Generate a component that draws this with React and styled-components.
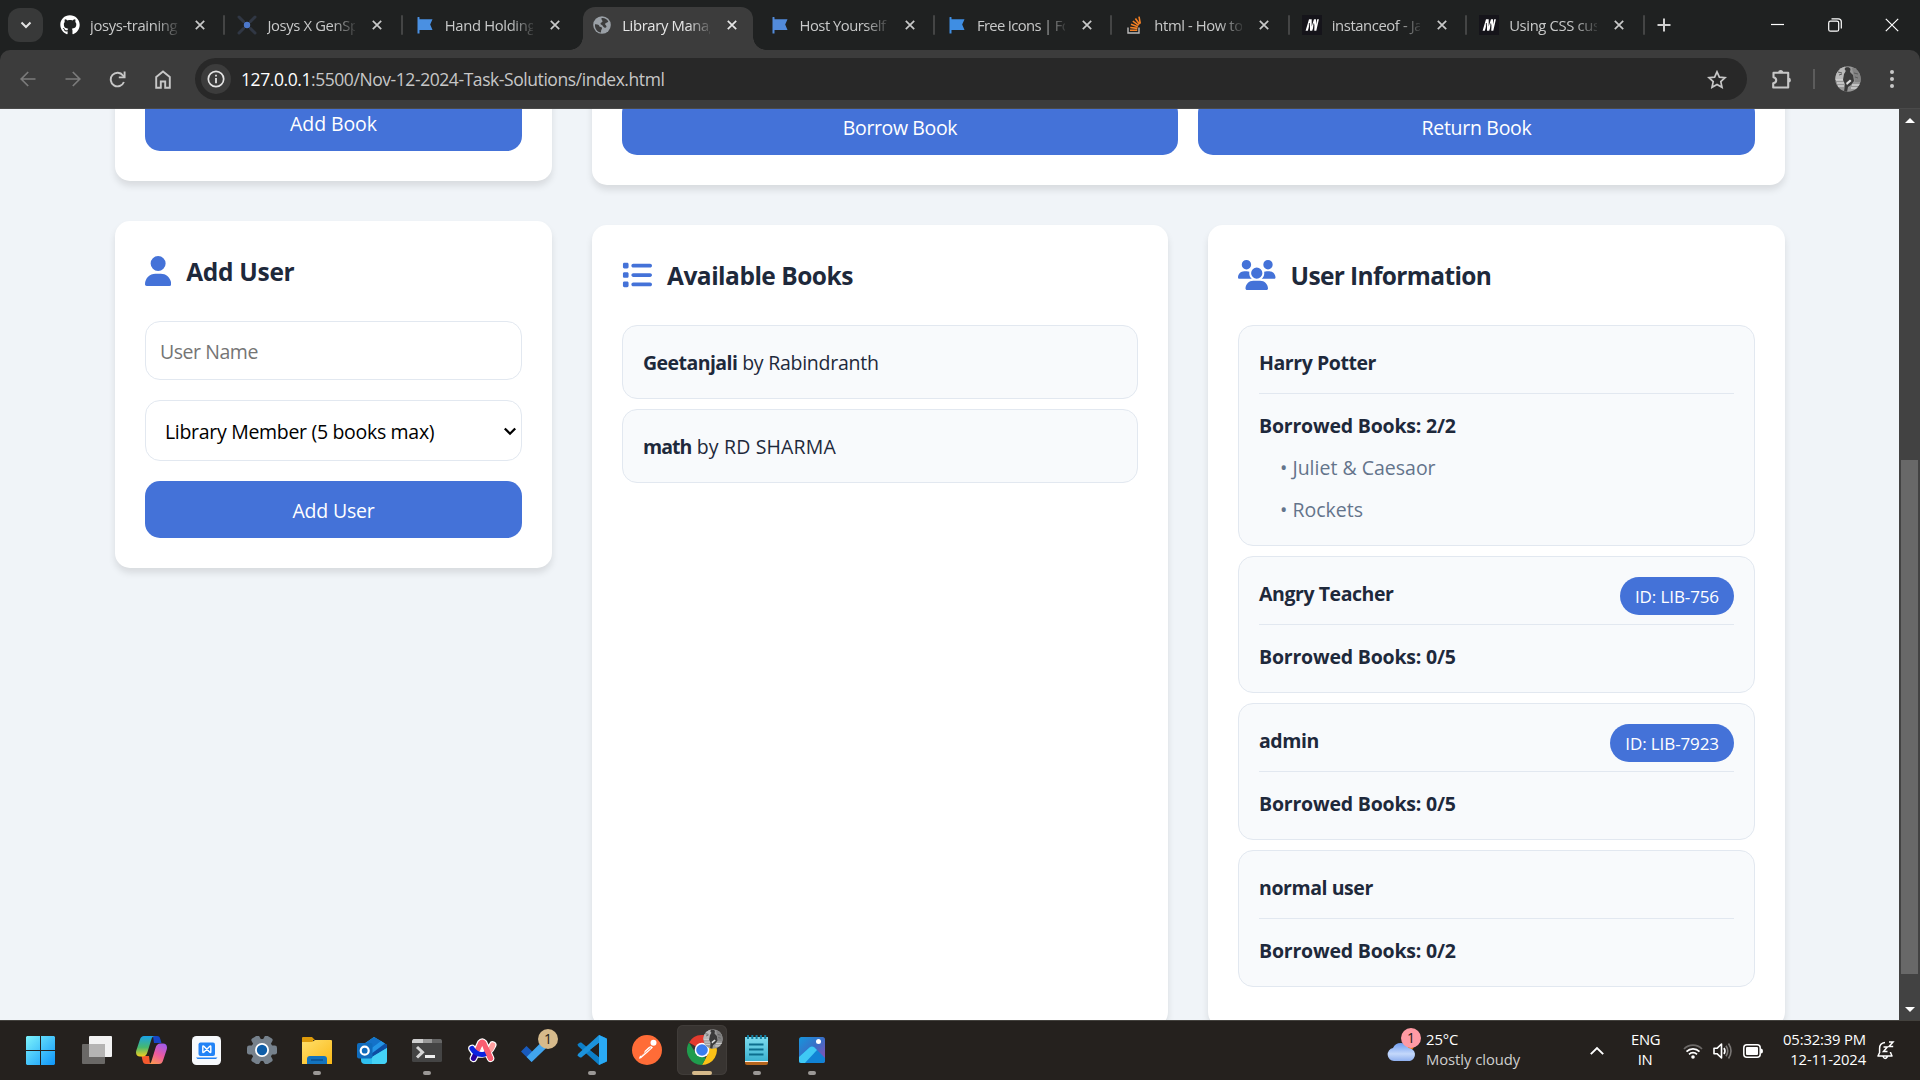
import React from "react";
import styled, { createGlobalStyle, css } from "styled-components";
import { FaUser, FaList, FaUsers, FaGithub } from "react-icons/fa6";

const GlobalStyle = createGlobalStyle`
  * { box-sizing: border-box; }
  body {
    margin: 0;
    overflow: hidden;
    font-family: "Open Sans", "Noto Sans", sans-serif;
  }
`;

const BLUE = "#4472d8";

const Screen = styled.div`
  width: 1920px;
  height: 1080px;
  display: flex;
  flex-direction: column;
  overflow: hidden;
  background: #1f2121;
`;

/* ---------- Browser chrome ---------- */

const TabStrip = styled.div`
  height: 50px;
  flex: none;
  display: flex;
  align-items: stretch;
  padding-left: 8px;
`;

const TabSearch = styled.button`
  width: 35px;
  height: 34px;
  margin: 8px 4px 0 0;
  border: 0;
  padding: 0;
  border-radius: 12px;
  background: #383939;
  display: grid;
  place-items: center;
`;

const TabItem = styled.div`
  position: relative;
  width: 177.4px;
  flex: none;
  display: grid;
  grid-template-columns: 20px 88px 22px;
  column-gap: 10px;
  align-items: center;
  padding-left: 13px;
  color: ${(p) => (p.$active ? "#e6e6e6" : "#c8c9c9")};
  isolation: isolate;

  ${(p) =>
    p.$separator &&
    css`
      &::after {
        content: "";
        position: absolute;
        right: -1px;
        top: 15px;
        width: 2px;
        height: 20px;
        border-radius: 1px;
        background: #444545;
      }
    `}
`;

const ActiveShape = styled.span`
  position: absolute;
  z-index: -1;
  top: 7px;
  bottom: 0;
  left: 4px;
  right: 4px;
  border-radius: 12px 12px 0 0;
  background: #3c3c3c;

  &::before,
  &::after {
    content: "";
    position: absolute;
    bottom: 0;
    width: 13px;
    height: 13px;
  }
  &::before {
    left: -13px;
    background: radial-gradient(circle at 0 0, transparent 12.5px, #3c3c3c 13px);
  }
  &::after {
    right: -13px;
    background: radial-gradient(circle at 100% 0, transparent 12.5px, #3c3c3c 13px);
  }
`;

const Favicon = styled.span`
  display: grid;
  place-items: center;
  width: 20px;
  height: 20px;
  color: #fff;
`;

const TabTitle = styled.span`
  font-size: 14.8px;
  line-height: 20px;
  letter-spacing: ${(p) => p.$ls || -0.35}px;
  white-space: nowrap;
  overflow: hidden;
  mask-image: linear-gradient(to right, #000 74%, rgba(0, 0, 0, 0.15) 100%);
`;

const TabClose = styled.span`
  display: grid;
  place-items: center;
  margin-left: 2px;
`;

const NewTab = styled.span`
  width: 40px;
  display: grid;
  place-items: center;
`;

const WindowControls = styled.div`
  margin-left: auto;
  display: grid;
  grid-template-columns: repeat(3, 57px);
  place-items: center;
  height: 49px;
`;

const Toolbar = styled.div`
  height: 59px;
  flex: none;
  display: flex;
  align-items: center;
  background: #3c3c3c;
  border-bottom: 1px solid #4a4a4a;
  border-radius: 10px 10px 0 0;
  padding-left: 5px;
`;

const NavButton = styled.span`
  width: 45px;
  height: 42px;
  display: grid;
  place-items: center;
`;

const AddressBar = styled.div`
  width: 1552px;
  flex: none;
  height: 42px;
  margin-left: 10px;
  padding: 0 20px 0 6px;
  border-radius: 21px;
  background: #282828;
  display: flex;
  align-items: center;
  gap: 10px;
`;

const InfoBadge = styled.span`
  width: 30px;
  height: 30px;
  border-radius: 50%;
  background: #3c3c3c;
  display: grid;
  place-items: center;
`;

const Url = styled.span`
  flex: 1;
  font-size: 17.5px;
  line-height: 24px;
  letter-spacing: -0.43px;
  color: #c7c7c7;
  b {
    font-weight: 400;
    color: #fff;
  }
`;

const ToolbarEnd = styled.div`
  flex: 1;
  display: flex;
  align-items: center;
  padding-left: 23px;
`;

const Divider = styled.span`
  width: 2px;
  height: 20px;
  margin: 0 20px;
  background: #5c5c5c;
`;

/* ---------- Page ---------- */

const Viewport = styled.div`
  height: 911px;
  flex: none;
  display: flex;
  background: #f0f4f8;
`;

const Page = styled.main`
  flex: 1;
  height: 911px;
  overflow: hidden;
  color: #1e293b;
`;

const Columns = styled.div`
  margin: -45px 114px 0 115px;
  display: grid;
  grid-template-columns: 437px 1fr;
  column-gap: 40px;
  align-items: start;
`;

const Stack = styled.div`
  display: flex;
  flex-direction: column;
  gap: 40px;
`;

const Split = styled.div`
  display: grid;
  grid-template-columns: 576px 577px;
  column-gap: 40px;
`;

const Card = styled.section`
  background: #fff;
  border-radius: 15px;
  padding: ${(p) => p.$top || 30}px 30px 30px;
  box-shadow: 0 5px 7.5px rgba(0, 0, 0, 0.1);
`;

const CardTitle = styled.h2`
  margin: 0 0 30px;
  height: 40px;
  display: flex;
  align-items: center;
  gap: 15px;
  font-size: 24.5px;
  line-height: 42px;
  font-weight: 700;
  letter-spacing: ${(p) => p.$ls}px;

  svg {
    color: ${BLUE};
    height: 30px;
    width: ${(p) => p.$icon}px;
    flex: none;
  }

  span {
    padding-top: 1px;
  }
`;

const ButtonRow = styled.div`
  display: grid;
  grid-template-columns: 556px 557px;
  gap: 20px;
`;

const Button = styled.button`
  display: block;
  width: 100%;
  height: 57px;
  border: 0;
  padding: 3px 0 0;
  border-radius: 15px;
  background: ${BLUE};
  color: #fff;
  font: 400 19.5px/30px "Open Sans", "Noto Sans", sans-serif;
  letter-spacing: ${(p) => p.$ls}px;
`;

const Form = styled.form`
  display: flex;
  flex-direction: column;
  gap: 20px;
`;

const fieldText = css`
  font: 400 19.5px/30px "Open Sans", "Noto Sans", sans-serif;
`;

const TextField = styled.input`
  ${fieldText}
  height: 59px;
  border: 1px solid #e2e8f0;
  border-radius: 15px;
  padding: 2px 14px 0;
  letter-spacing: -0.45px;
  outline: 0;
  &::placeholder {
    color: #757575;
    opacity: 1;
  }
`;

const SelectField = styled.div`
  ${fieldText}
  height: 61px;
  border: 1px solid #e2e8f0;
  border-radius: 15px;
  padding: 2px 4px 0 19px;
  color: #000;
  letter-spacing: -0.31px;
  display: flex;
  align-items: center;
  justify-content: space-between;
`;

const List = styled.ul`
  list-style: none;
  margin: 0;
  padding: 0 0 10px;
  display: flex;
  flex-direction: column;
  gap: 10px;
`;

const Item = styled.li`
  border: 1px solid #e2e8f0;
  border-radius: 15px;
  background: #f8fafc;
  padding: ${(p) => (p.$book ? "21px 20px 19px" : "20px")};
  font-size: 19.5px;
  line-height: 32px;
  letter-spacing: ${(p) => p.$ls || 0}px;
`;

const Strong = styled.strong`
  font-size: 19.5px;
  font-weight: 700;
  letter-spacing: ${(p) => p.$ls || -0.43}px;
`;

const UserHead = styled.div`
  height: 48px;
  display: flex;
  justify-content: space-between;
  align-items: flex-start;
  border-bottom: 1px solid #e2e8f0;
  margin-bottom: 16px;

  ${Strong} {
    padding-top: 1px;
  }
`;

const IdBadge = styled.span`
  height: 38px;
  padding: 0 15px;
  border-radius: 19px;
  background: ${BLUE};
  color: #fff;
  font-size: 17px;
  line-height: 39px;
  letter-spacing: -0.1px;
  white-space: nowrap;
`;

const Borrowed = styled.div`
  height: 31px;
`;

const Loan = styled.div`
  margin-top: 11px;
  margin-bottom: -1px;
  padding-left: 21px;
  color: #64748b;
`;

const ScrollTrack = styled.div`
  width: 21px;
  background: #424242;
  display: flex;
  flex-direction: column;
  align-items: center;
  padding: 9px 0 8px;
`;

const ScrollArrow = styled.span`
  border: 5.5px solid transparent;
  ${(p) => (p.$up ? "border-top: 0; border-bottom-color: #fff;" : "border-bottom: 0; border-top-color: #fff;")}
`;

const ScrollThumb = styled.span`
  width: 17px;
  height: 514px;
  margin: 337px 0 auto;
  background: #686868;
`;

/* ---------- Taskbar ---------- */

const TaskBar = styled.footer`
  height: 60px;
  flex: none;
  border-top: 1px solid #43413d;
  background: #25211e;
  display: flex;
  align-items: center;
  padding: 0 26px 0 14px;
  color: #fff;
`;

const AppSlot = styled.span`
  position: relative;
  width: 55px;
  height: 59px;
  display: grid;
  place-items: center;
`;

const AppTile = styled.span`
  width: 50px;
  height: 50px;
  margin-bottom: 1px;
  border-radius: 6px;
  display: grid;
  place-items: center;
  ${(p) => p.$active && "background: #383431; box-shadow: inset 0 0 0 1px #403c39;"}

  svg {
    margin-right: ${(p) => (p.$shift ? p.$shift : 0)}px;
  }
`;

const RunningMark = styled.span`
  position: absolute;
  bottom: 5px;
  width: ${(p) => (p.$wide ? 20 : 8)}px;
  height: 4px;
  border-radius: 2px;
  background: ${(p) => (p.$wide ? "#d6ba8b" : "#9b9896")};
`;

const CountBadge = styled.span`
  position: absolute;
  top: ${(p) => p.$y}px;
  left: ${(p) => p.$x}px;
  width: 20px;
  height: 20px;
  border-radius: 50%;
  background: ${(p) => p.$color};
  color: #1f1a17;
  font-size: 14px;
  line-height: 20px;
  text-align: center;
`;

const Weather = styled.div`
  position: relative;
  margin-left: auto;
  margin-right: 70px;
  height: 59px;
  display: flex;
  align-items: center;
  gap: 9px;
`;

const TrayText = styled.div`
  width: ${(p) => p.$w}px;
  text-align: ${(p) => p.$align || "left"};
  font-size: 14.8px;
  line-height: 20px;
  letter-spacing: ${(p) => p.$ls || 0}px;
  margin-right: ${(p) => p.$mr || 0}px;
  white-space: nowrap;
  padding-bottom: 3px;
  div + div {
    color: ${(p) => p.$second || "#fff"};
  }
`;

const TrayIcon = styled.svg`
  margin-right: ${(p) => p.$mr}px;
  flex: none;
  overflow: visible;
`;

/* ---------- Icons ---------- */

const CloseX = ({ color = "#c8c9c9" }) => (
  <svg width="10" height="10" viewBox="0 0 10 10">
    <path d="M.8.8l8.4 8.4M9.2.8L.8 9.2" stroke={color} strokeWidth="1.7" />
  </svg>
);

const Josys = () => (
  <svg width="20" height="20" viewBox="0 0 20 20">
    <path d="M2 2l4.5 4.5M18 2l-4.5 4.5M2 18l4.5-4.5M18 18l-4.5-4.5" stroke="#303744" strokeWidth="3" strokeLinecap="round" />
    <circle cx="10" cy="10" r="3.2" fill="#4c78cc" />
  </svg>
);

const Flag = ({ color }) => (
  <svg width="16" height="17" viewBox="0 0 16 17">
    <path d="M.5.8A1 1 0 0 1 2.500.8V2.300h13l-2.300 5.200 2.300 5.500h-13v3.500h-2z" fill={color} />
  </svg>
);

const Globe = () => (
  <svg width="18" height="18" viewBox="0 0 18 18">
    <circle cx="9" cy="9" r="8.800" fill="#9aa0a6" />
    <path d="M2 8.200c2.200-.3 4 .5 4.300 1.800.3 1.300 2.500.5 2.700 2.300.1 1.200-1.200 1.600-1 4.200-3.600-.5-6.400-3.800-6-8.300zM8.600 2c2.800-.5 5.400 1 6.700 3.400-.8 1.500-2.700.9-3.100 2.300-.4 1.400 1.900 1.700 1.200 3.300-.7 1.500-2.800.3-3.600-1.100-.8-1.500-2.500-.9-2.300-2.400.2-1.300 2-.8 2-2.300 0-1.200-1.700-1.500-.9-3.200z" fill="#3c3c3c" />
  </svg>
);

const StackOverflow = () => (
  <svg width="15" height="18" viewBox="0 0 15 18">
    <path d="M1 11.500v5.500h11v-5.500" fill="none" stroke="#bcbbbb" strokeWidth="1.400" />
    <path d="M3 14.300h7.200M3.200 11.500l7.200.9M4 8.300l6.800 2.400M5.800 5.200l5.800 4.200M8.400 2.500l4.200 5.800M12 .6l1.300 7" stroke="#f48024" strokeWidth="1.600" />
  </svg>
);

const Mdn = () => (
  <svg width="20" height="20" viewBox="0 0 20 20">
    <rect width="20" height="20" fill="#15141a" />
    <path d="M7 4.300h2.400l-3.600 11.400H3.600zM8 4.300h1.700v11.400H8zM12 4.300h1.900l-3.700 11.400H8.300zM12.300 4.300H14v11.400h-1.700zM15.200 4.300h1.700l-2.600 11.400h-1.700z" fill="#fff" />
    <path d="M7.400 8v5M11.700 8.500v5" stroke="#15141a" strokeWidth=".8" />
  </svg>
);

const Portrait = ({ size }) => (
  <svg width={size} height={size} viewBox="0 0 26 26">
    <defs>
      <clipPath id={`p${size}`}>
        <circle cx="13" cy="13" r="12.700" />
      </clipPath>
    </defs>
    <g clipPath={`url(#p${size})`}>
      <rect width="26" height="26" fill="#979797" />
      <path d="M0 0h10v8l-2 6H0z" fill="#b9b9b9" />
      <path d="M17 2h9v14h-6z" fill="#828282" />
      <path d="M1 14h8M2 17h7M3 20h6M17 19h9M16 22h8" stroke="#d2d2d2" strokeWidth="1.300" />
      <path d="M9.500 3c1-2.500 5-2.500 6 0l-.5 3 3 3 1 6-3 4-3 2-1 5h-3l1-8-2-4 1-6 2-3z" fill="#3a3a3a" />
      <path d="M11 17l4-3.500 1.500 1.500-4.500 4z" fill="#e0e0e0" />
      <path d="M3 6l4 1M4 9l3-1M19 7l4 1M20 11l3 1" stroke="#5c5c5c" />
    </g>
  </svg>
);

const Win = () => (
  <svg width="29" height="29" viewBox="0 0 29 29">
    <defs>
      <linearGradient id="win" x1="0" y1="0" x2="29" y2="29" gradientUnits="userSpaceOnUse">
        <stop stopColor="#7df3fb" />
        <stop offset="1" stopColor="#0f96fa" />
      </linearGradient>
    </defs>
    <path fill="url(#win)" d="M1 0h13v14H0V1zM15 0h13l1 1v13H15zM0 15h14v14H1l-1-1zM15 15h14v13l-1 1H15z" />
  </svg>
);

const TaskView = () => (
  <svg width="30" height="28" viewBox="0 0 30 28">
    <rect y="8" width="23" height="20" rx="1" fill="#6a6866" />
    <rect x="7" y="0" width="23" height="21" rx="1" fill="#f2f2f2" />
    <path d="M7 8h16v13H7z" fill="#b5b4b3" />
  </svg>
);

const Copilot = () => (
  <svg width="31" height="28" viewBox="0 0 31 28">
    <defs>
      <linearGradient id="cpa" x1="0" y1="0" x2="0" y2="1">
        <stop stopColor="#1aa3e8" />
        <stop offset=".55" stopColor="#46b86f" />
        <stop offset="1" stopColor="#f3cf1f" />
      </linearGradient>
      <linearGradient id="cpb" x1="0.700" y1="0" x2="0.200" y2="1">
        <stop stopColor="#a45be8" />
        <stop offset=".5" stopColor="#ee5a9d" />
        <stop offset="1" stopColor="#fb9a4e" />
      </linearGradient>
    </defs>
    <path d="M17 0h4c2 0 2.800 1 3.300 3l1.200 4H18z" fill="#1746c8" />
    <path d="M14 28h-4c-2 0-2.800-1-3.300-3l-1.200-5H13z" fill="#f4592e" />
    <path d="M8 0h11c-2 0-3 1-3.800 4l-3.700 12c-.9 3-2.200 4.500-5 4.500H4c-3 0-4.700-2-3.700-6L3.800 4C4.700 1 6 0 8 0z" fill="url(#cpa)" />
    <path d="M23 28H12c2 0 3-1 3.800-4l3.700-12c.9-3 2.200-4.500 5-4.500H27c3 0 4.700 2 3.700 6L27.200 24c-.9 3-2.200 4-4.200 4z" fill="url(#cpb)" />
  </svg>
);

const MyPc = () => (
  <svg width="29" height="29" viewBox="0 0 29 29">
    <rect width="29" height="29" rx="4.500" fill="#f7f9fc" />
    <rect x="6.500" y="6.500" width="16.500" height="13.500" rx="2" fill="#2383f6" />
    <path d="M10.800 15.800v-5.200q0-1.200 1-.4l6 6q1 .8 1-.4v-5.200q0-1.200-1-.4l-6 6q-1 .8-1-.4z" fill="none" stroke="#fff" strokeWidth="1.400" strokeLinejoin="round" />
    <path d="M4 21.500h21.500l-1.500 1.500H5.500z" fill="#2383f6" />
  </svg>
);

const Gear = () => (
  <svg width="30" height="28" viewBox="0 0 30 28">
    <g fill="#76818c">
      <circle cx="15" cy="14" r="11" />
      {[0, 60, 120, 180, 240, 300].map((a) => (
        <rect key={a} x="10.500" y="-1" width="9" height="9" rx="2.200" transform={`rotate(${a + 30} 15 14)`} />
      ))}
    </g>
    <circle cx="15" cy="14" r="7" fill="#fff" />
    <circle cx="15" cy="14" r="5.200" fill="#0f5ea8" />
  </svg>
);

const Folder = () => (
  <svg width="30" height="27" viewBox="0 0 30 27">
    <defs>
      <linearGradient id="fold" x1="0" y1="0" x2="1" y2="1">
        <stop stopColor="#ffdf6b" />
        <stop offset="1" stopColor="#fbb917" />
      </linearGradient>
    </defs>
    <path d="M0 1q0-1 1-1h9l3 3h-2v5H0z" fill="#dd9a0a" />
    <path d="M0 5h10l3-2h16q1 0 1 1v23H0z" fill="url(#fold)" />
    <path d="M5 27v-5q0-3 3-3h14q3 0 3 3v5z" fill="#1373be" />
    <path d="M9 23h12" stroke="#0a4f91" strokeWidth="1.500" />
  </svg>
);

const Outlook = () => (
  <svg width="30" height="27" viewBox="0 0 30 27">
    <path d="M4 9L17 0l13 8v15q0 4-4 4H8q-4 0-4-4z" fill="#2fc0ef" />
    <path d="M4 9L17 0l8 4.500L11 14H4z" fill="#1472c9" />
    <path d="M14 16L27 6l3 2v3L15 20z" fill="#0d4ea3" />
    <path d="M11 14L24 4l4 2.500L14 17z" fill="#2495e6" />
    <path d="M15 20l15-9v12q0 4-4 4H15z" fill="#44d2f6" />
    <rect y="6" width="15.500" height="15.500" rx="2" fill="#0f6cbd" />
    <circle cx="7.700" cy="13.700" r="4" fill="none" stroke="#fff" strokeWidth="2.200" />
  </svg>
);

const Terminal = () => (
  <svg width="30" height="23" viewBox="0 0 30 23">
    <rect width="30" height="23" rx="1.500" fill="#444" />
    <path d="M1.500 0H11v4H0V1.500z" fill="#cfcfcf" />
    <path d="M11 0h9v4h-9z" fill="#999" />
    <path d="M20 0h8.500L30 1.500V4H20z" fill="#666" />
    <path d="M5 8l5.500 5.200L5 18.500" fill="none" stroke="#d5d5d5" strokeWidth="3" />
    <path d="M13 17.500h10" stroke="#eee" strokeWidth="3" />
  </svg>
);

const Arc = () => (
  <svg width="29" height="25" viewBox="0 0 29 25">
    <g fill="none" strokeLinecap="round" strokeLinejoin="round">
      <path d="M4 10.500q3 6 10 5.500T24.700 7M5.500 20.300L12.700 5q1.500-2 3 0L22.500 20.300" stroke="#fff" strokeWidth="7.600" />
      <path d="M5.500 20.300l2-4" stroke="#2a02a0" strokeWidth="5.200" />
      <path d="M24.700 7q-1 4-5 7" stroke="#ff9f9f" strokeWidth="5.200" />
      <path d="M9.500 12L12.700 5q1.500-2 3 0L22.500 20.300" stroke="#fa5d70" strokeWidth="5.200" />
      <path d="M4 10.500q3.500 6 10 6 2 0 3.500-.8" stroke="#0b23e0" strokeWidth="5.200" />
      <path d="M18.300 11l4.200 9.300" stroke="#fa5d70" strokeWidth="5.200" />
    </g>
    <path d="M12.500 13.300l1.700-3.600 1.700 3.600q-1.700.7-3.400 0z" fill="#fff" />
  </svg>
);

const Todo = () => (
  <svg width="33" height="24" viewBox="0 0 33 24">
    <path d="M1 13.500L6.500 8l10.700 10.300-5.600 5.700z" fill="#185abd" />
    <path d="M6.600 18.900L25 .5l5.500 5.500-18.900 18z" fill="#41a5ee" />
  </svg>
);

const VsCode = () => (
  <svg width="30" height="30" viewBox="0 0 30 30">
    <path d="M22 0l8 3.500v23L22 30 1 11l-.5-1.800L3 7.500h1.300L22 22z" fill="#0d7fc8" />
    <path d="M22 0v8L4.300 22.500H3L.5 20.800 1 19z" fill="#1c93dc" />
    <path d="M22 0l7 3.200q1 .5 1 1.500v20.600q0 1-1 1.500L22 30z" fill="#2aaaf5" />
    <path d="M22 8l-9 7 9 7z" fill="#25211e" />
  </svg>
);

const Postman = () => (
  <svg width="30" height="30" viewBox="0 0 30 30">
    <circle cx="15" cy="15" r="15" fill="#ff6c37" />
    <circle cx="21.500" cy="7.800" r="3" fill="#fff" />
    <path d="M19 11l2 1.500-6 5.500-6 5.200-2.200.6 1-2.600 4-2.800 1-2.700 4-3.700z" fill="#fff" />
    <path d="M9 21l10-8.500" stroke="#ff6c37" strokeWidth=".7" />
  </svg>
);

const Chrome = () => (
  <svg width="30" height="30" viewBox="0 0 30 30">
    <path d="M15 15L2 7.500A15 15 0 0 1 28 7.500z" fill="#e33b2e" />
    <path d="M15 8h13.200a15 15 0 0 1-13.200 22l6.200-11.500z" fill="#fbc116" />
    <path d="M9 18.500L2 7.500A15 15 0 0 0 15 30l4-7z" fill="#1f9c4d" />
    <circle cx="15" cy="15" r="7.300" fill="#fff" />
    <circle cx="15" cy="15" r="5.800" fill="#3b7ded" />
  </svg>
);

const ProfileDot = styled.span`
  position: absolute;
  top: 8px;
  left: 29px;
  display: flex;
`;

const Notepad = () => (
  <svg width="23" height="30" viewBox="0 0 23 30">
    <defs>
      <linearGradient id="note" x1="0" y1="0" x2="0" y2="1">
        <stop stopColor="#7edcee" />
        <stop offset="1" stopColor="#3bb2d0" />
      </linearGradient>
    </defs>
    <path d="M0 24h23v4q0 2-2 2H2q-2 0-2-2z" fill="#b5651d" />
    <path d="M0 24h23v3H0z" fill="#f3efe9" />
    <path d="M0 2h23v24H0z" fill="url(#note)" />
    <path d="M4 9.500h14.500M4 14.500h14.500M4 19.500h14.500" stroke="#0c6e8e" strokeWidth="2" />
    <path d="M3 0v4M7.300 0v4M11.600 0v4M15.900 0v4M20.200 0v4" stroke="#1580a2" strokeWidth="2" />
  </svg>
);

const Photos = () => (
  <svg width="26" height="26" viewBox="0 0 26 26">
    <defs>
      <linearGradient id="ph" x1="0" y1="0" x2="1" y2="1">
        <stop stopColor="#1696dc" />
        <stop offset=".5" stopColor="#3a6dc6" />
        <stop offset="1" stopColor="#9a4bb0" />
      </linearGradient>
      <clipPath id="phc">
        <rect width="26" height="26" rx="2.500" />
      </clipPath>
    </defs>
    <g clipPath="url(#phc)">
      <rect width="26" height="26" fill="url(#ph)" />
      <path d="M4 27l8.500-9.500q2-2 4 0L26 27z" fill="#1183d5" />
      <path d="M-1 21L10.500 10.500q2.500-2 5 0L27 22v5H-1z" fill="#1183d5" />
      <path d="M-1 21L10.500 10.500q2.500-2 5 0l2.500 2.500L5 27h-6z" fill="#3fc9f5" />
      <circle cx="19.500" cy="4.500" r="2.500" fill="#fff" />
    </g>
  </svg>
);

const Cloud = () => (
  <svg width="30" height="22" viewBox="0 0 30 22">
    <defs>
      <linearGradient id="cl" x1="0" y1="0" x2="0" y2="1">
        <stop stopColor="#6f9df0" />
        <stop offset=".6" stopColor="#c4d8fb" />
        <stop offset="1" stopColor="#8fb0ef" />
      </linearGradient>
    </defs>
    <circle cx="22" cy="4" r="6" fill="#f2780c" />
    <path d="M7 21a6.500 6.500 0 0 1-1-12.900A8.500 8.500 0 0 1 21.500 8 6.600 6.600 0 0 1 23 21z" fill="url(#cl)" />
  </svg>
);

/* ---------- Data ---------- */

const tabs = [
  { title: "josys-training", icon: <FaGithub size={20} />, sep: true },
  { title: "Josys X GenSpark", icon: <Josys />, sep: true },
  { title: "Hand Holding", icon: <Flag color="#4a90e2" /> },
  { title: "Library Management", icon: <Globe />, active: true },
  { title: "Host Yourself", icon: <Flag color="#528bdb" />, sep: true, ls: -0.5 },
  { title: "Free Icons | Font", icon: <Flag color="#3f8ee3" />, sep: true, ls: -0.65 },
  { title: "html - How to use", icon: <StackOverflow />, sep: true, ls: -0.4 },
  { title: "instanceof - JavaScript", icon: <Mdn />, sep: true, ls: -0.4 },
  { title: "Using CSS custom", icon: <Mdn />, sep: true },
];

const users = [
  { name: "Harry Potter", count: "2/2", loans: ["Juliet & Caesaor", "Rockets"] },
  { name: "Angry Teacher", count: "0/5", id: "ID: LIB-756" },
  { name: "admin", count: "0/5", id: "ID: LIB-7923" },
  { name: "normal user", count: "0/2" },
];

const apps = [
  { icon: <Win />, shift: 3 },
  { icon: <TaskView /> },
  { icon: <Copilot /> },
  { icon: <MyPc /> },
  { icon: <Gear /> },
  { icon: <Folder />, running: true },
  { icon: <Outlook /> },
  { icon: <Terminal />, running: true },
  { icon: <Arc />, shift: -2 },
  { icon: <Todo />, badge: true },
  { icon: <VsCode />, running: true },
  { icon: <Postman /> },
  { icon: <Chrome />, active: true },
  { icon: <Notepad />, running: true },
  { icon: <Photos />, running: true },
];

/* ---------- Sections ---------- */

const BrowserTabs = () => (
  <TabStrip>
    <TabSearch>
      <svg width="12" height="8" viewBox="0 0 12 8">
        <path d="M1.500 1.500L6 6l4.500-4.500" fill="none" stroke="#e3e3e3" strokeWidth="2" />
      </svg>
    </TabSearch>
    {tabs.map((t) => (
      <TabItem key={t.title} $active={t.active} $separator={t.sep}>
        {t.active && <ActiveShape />}
        <Favicon>{t.icon}</Favicon>
        <TabTitle $ls={t.ls}>{t.title}</TabTitle>
        <TabClose>
          <CloseX color={t.active ? "#e6e6e6" : "#c8c9c9"} />
        </TabClose>
      </TabItem>
    ))}
    <NewTab>
      <svg width="14" height="14" viewBox="0 0 14 14">
        <path d="M7 .5v13M.5 7h13" stroke="#d0d0d0" strokeWidth="2" />
      </svg>
    </NewTab>
    <WindowControls>
      <svg width="13" height="13" viewBox="0 0 13 13">
        <path d="M0 6.500h13" stroke="#fff" strokeWidth="1.200" />
      </svg>
      <svg width="14" height="14" viewBox="0 0 14 14" fill="none" stroke="#fff" strokeWidth="1.200">
        <rect x=".7" y="3.200" width="10" height="10" rx="1.800" />
        <path d="M3.500.8h6.800q3 0 3 3v6.700" />
      </svg>
      <svg width="14" height="14" viewBox="0 0 14 14">
        <path d="M.8.8l12.400 12.400M13.200.8L.8 13.200" stroke="#fff" strokeWidth="1.200" />
      </svg>
    </WindowControls>
  </TabStrip>
);

const BrowserToolbar = () => (
  <Toolbar>
    <NavButton>
      <svg width="16" height="16" viewBox="0 0 16 16" fill="none" stroke="#7b7b7b" strokeWidth="1.700">
        <path d="M15.500 8H1.500M8.200 1L1.200 8l7 7" />
      </svg>
    </NavButton>
    <NavButton>
      <svg width="16" height="16" viewBox="0 0 16 16" fill="none" stroke="#7b7b7b" strokeWidth="1.700">
        <path d="M.5 8h14M7.800 1l7 7-7 7" />
      </svg>
    </NavButton>
    <NavButton>
      <svg width="17" height="17" viewBox="0 0 17 17" fill="none" stroke="#c7c7c7" strokeWidth="1.900">
        <path d="M14.900 11A6.800 6.800 0 1 1 14 4.500l1 1.300" />
        <path d="M15.600.6v5.800H9.800" />
      </svg>
    </NavButton>
    <NavButton>
      <svg width="16" height="19" viewBox="0 0 16 19" fill="none" stroke="#c7c7c7" strokeWidth="1.900">
        <path d="M1.200 7L8 1.500 14.800 7v10.800h-4.600v-6.300H5.800v6.300H1.200z" />
      </svg>
    </NavButton>
    <AddressBar>
      <InfoBadge>
        <svg width="18" height="18" viewBox="0 0 18 18">
          <circle cx="9" cy="9" r="7.700" fill="none" stroke="#e3e3e3" strokeWidth="1.700" />
          <path d="M9 8v5.200M9 4.700v1.900" stroke="#e3e3e3" strokeWidth="1.800" />
        </svg>
      </InfoBadge>
      <Url>
        <b>127.0.0.1</b>:5500/Nov-12-2024-Task-Solutions/index.html
      </Url>
      <svg width="20" height="19" viewBox="0 0 20 19">
        <path d="M10 1.800l2.400 5.300 5.700.6-4.300 3.900 1.200 5.700-5-2.900-5 2.900 1.200-5.700L1.900 7.700l5.700-.6z" fill="none" stroke="#c7c7c7" strokeWidth="1.700" />
      </svg>
    </AddressBar>
    <ToolbarEnd>
      <svg width="23" height="23" viewBox="0 0 23 23">
        <path d="M3.500 4.800h14.700v14.700H3.200v-4.300q3-.6 3-3t-2.700-3z" fill="none" stroke="#c7c7c7" strokeWidth="2.100" strokeLinejoin="round" />
        <path d="M8.200 4.500a2.500 2.500 0 0 1 5 0zM18.500 9.700a2.400 2.400 0 0 1 0 4.900z" fill="#c7c7c7" />
      </svg>
      <Divider />
      <Portrait size={26} />
      <svg width="58" height="18" viewBox="0 0 58 18" fill="#c7c7c7">
        <circle cx="31" cy="2" r="2" />
        <circle cx="31" cy="9" r="2" />
        <circle cx="31" cy="16" r="2" />
      </svg>
    </ToolbarEnd>
  </Toolbar>
);

const UserCard = ({ user }) => (
  <Item>
    <UserHead>
      <Strong>{user.name}</Strong>
      {user.id && <IdBadge>{user.id}</IdBadge>}
    </UserHead>
    <Borrowed>
      <Strong $ls={-0.2}>Borrowed Books: {user.count}</Strong>
    </Borrowed>
    {user.loans?.map((l) => (
      <Loan key={l}>• {l}</Loan>
    ))}
  </Item>
);

const LibraryPage = () => (
  <Viewport>
    <Page>
      <Columns>
        <Stack>
          <Card>
            <Button $ls={-0.1}>Add Book</Button>
          </Card>
          <Card>
            <CardTitle $ls={-0.3} $icon={26.25}>
              <FaUser />
              <span>Add User</span>
            </CardTitle>
            <Form>
              <TextField placeholder="User Name" />
              <SelectField>
                Library Member (5 books max)
                <svg width="14" height="10" viewBox="0 0 14 10">
                  <path d="M1.800 1.500L7 6.700l5.200-5.200" fill="none" stroke="#000" strokeWidth="2.300" />
                </svg>
              </SelectField>
              <Button type="button" $ls={-0.2}>
                Add User
              </Button>
            </Form>
          </Card>
        </Stack>
        <Stack>
          <Card $top={34}>
            <ButtonRow>
              <Button $ls={-0.38}>Borrow Book</Button>
              <Button $ls={-0.3}>Return Book</Button>
            </ButtonRow>
          </Card>
          <Split>
            <Card>
              <CardTitle $ls={-0.5} $icon={30}>
                <FaList />
                <span>Available Books</span>
              </CardTitle>
              <List>
                <Item $book $ls={-0.26}>
                  <Strong $ls={-0.55}>Geetanjali</Strong> by Rabindranth
                </Item>
                <Item $book $ls={0.17}>
                  <Strong $ls={-0.95}>math</Strong> by RD SHARMA
                </Item>
              </List>
            </Card>
            <Card>
              <CardTitle $ls={-0.63} $icon={37.5}>
                <FaUsers />
                <span>User Information</span>
              </CardTitle>
              <List>
                {users.map((u) => (
                  <UserCard key={u.name} user={u} />
                ))}
              </List>
            </Card>
          </Split>
        </Stack>
      </Columns>
    </Page>
    <ScrollTrack>
      <ScrollArrow $up />
      <ScrollThumb />
      <ScrollArrow />
    </ScrollTrack>
  </Viewport>
);

const WindowsTaskbar = () => (
  <TaskBar>
    {apps.map((a, i) => (
      <AppSlot key={i}>
        <AppTile $active={a.active} $shift={a.shift}>
          {a.icon}
        </AppTile>
        {a.badge && (
          <CountBadge $x={29} $y={8} $color="#d6ba8b">
            1
          </CountBadge>
        )}
        {a.active && (
          <ProfileDot>
            <Portrait size={20} />
          </ProfileDot>
        )}
        {(a.running || a.active) && <RunningMark $wide={a.active} />}
      </AppSlot>
    ))}
    <Weather>
      <Cloud />
      <CountBadge $x={14} $y={7} $color="#ff9aa4">
        1
      </CountBadge>
      <TrayText $w={94} $second="#cfcfce" $ls={-0.05}>
        <div>25°C</div>
        <div>Mostly cloudy</div>
      </TrayText>
    </Weather>
    <TrayIcon $mr={27} width="14" height="8" viewBox="0 0 14 8">
      <path d="M.8 7.200L7 1l6.200 6.200" fill="none" stroke="#fff" strokeWidth="1.900" />
    </TrayIcon>
    <TrayText $w={28} $align="center" $mr={24} $ls={-0.3}>
      <div>ENG</div>
      <div>IN</div>
    </TrayText>
    <TrayIcon $mr={10} width="20" height="16" viewBox="0 0 20 16" fill="none" stroke="#fff" strokeWidth="1.700">
      <path d="M1 6a12.500 12.500 0 0 1 18 0" stroke="#6c6967" />
      <path d="M3.500 8.700a9 9 0 0 1 13 0M6 11.300a5.700 5.700 0 0 1 8 0" />
      <circle cx="10" cy="14" r="1.800" fill="#fff" stroke="none" />
    </TrayIcon>
    <TrayIcon $mr={10} width="20" height="18" viewBox="0 0 20 18" fill="none" stroke="#fff" strokeWidth="1.600">
      <path d="M1 6.300h3L8.500 2v14L4 11.700H1z" strokeLinejoin="round" />
      <path d="M11 6q2 3 0 6" />
      <path d="M13 3.800q3.500 5.200 0 10.400M15.500 1.500q5 7.500 0 15" stroke="#7a7775" />
    </TrayIcon>
    <TrayIcon $mr={19} width="20" height="14" viewBox="0 0 20 14">
      <rect x=".8" y=".8" width="16.400" height="12.400" rx="3" fill="none" stroke="#fff" strokeWidth="1.500" />
      <rect x="3" y="3" width="12" height="8" rx="1" fill="#fff" />
      <path d="M18 4.500q2 0 2 2.500t-2 2.500z" fill="#fff" />
    </TrayIcon>
    <TrayText $w={84} $align="right" $mr={11} $ls={-0.15}>
      <div>05:32:39 PM</div>
      <div>12-11-2024</div>
    </TrayText>
    <TrayIcon $mr={0} width="17" height="19" viewBox="0 0 17 19" fill="none" stroke="#fff" strokeWidth="1.500">
      <path d="M8 1.500Q2.600 2 2.600 7.500v4L1 15h14l-1.500-3.500V11M6 15.500q2 3.800 4.500 0" strokeLinejoin="round" />
      <path d="M6.500 6h3.800l-3.800 4.500h4M12 1h4l-4 4.500h4.200" />
    </TrayIcon>
  </TaskBar>
);

export default function App() {
  return (
    <>
      <GlobalStyle />
      <Screen>
        <BrowserTabs />
        <BrowserToolbar />
        <LibraryPage />
        <WindowsTaskbar />
      </Screen>
    </>
  );
}
